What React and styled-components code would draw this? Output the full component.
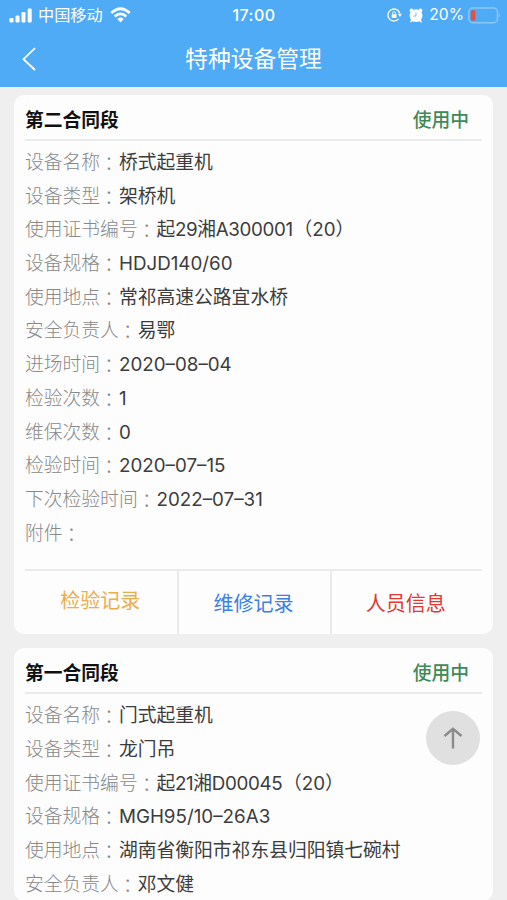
import React from 'react';
import styled, { createGlobalStyle } from 'styled-components';

const GlobalStyle = createGlobalStyle`
  * {
    box-sizing: border-box;
  }

  body {
    margin: 0;
    background: #efefef;
    font-family: Inter, 'Noto Sans CJK SC', sans-serif;
  }

  button {
    font-family: inherit;
    border: none;
    padding: 0;
    background: transparent;
  }
`;

const Page = styled.div`
  height: 900px;
  overflow: hidden;
  background: #efefef;
`;

const Header = styled.header`
  height: 87px;
  background: #50abf7;
  color: white;
`;

const StatusBar = styled.div`
  display: grid;
  grid-template-columns: 1fr auto 1fr;
  align-items: center;
  height: 30px;
  padding: 0 6px 0 9px;
  font-size: 16px;
  line-height: 30px;
`;

const StatusGroup = styled.div`
  display: flex;
  align-items: center;
  justify-content: ${(props) => (props.$end ? 'flex-end' : 'flex-start')};

  svg {
    flex-shrink: 0;
  }
`;

const Carrier = styled.span`
  margin: 0 7px 0 6px;
  font-size: 16.2px;
`;

const Clock = styled.span`
  margin-right: 2px;
  font-weight: 500;
  letter-spacing: 0.5px;
`;

const Percent = styled.span`
  margin: 0 4px 0 6px;
  font-size: 15.6px;
`;

const NavBar = styled.div`
  display: grid;
  grid-template-columns: 60px 1fr 60px;
  align-items: center;
  height: 57px;
`;

const BackButton = styled.button`
  display: flex;
  padding-left: 21px;
  color: white;
`;

const NavTitle = styled.h1`
  margin: 0;
  font-size: 22.8px;
  font-weight: 400;
  line-height: 56px;
  text-align: center;
`;

const List = styled.main`
  display: flex;
  flex-direction: column;
  gap: 14px;
  padding: 8px 14px 0;
`;

const Card = styled.section`
  padding: 0 11px;
  border-radius: 10px;
  background: #fdfdfd;
`;

const CardHeader = styled.div`
  display: flex;
  justify-content: space-between;
  height: 46px;
  padding-right: 13px;
  border-bottom: 2px solid #e9eaec;
  font-size: 18.8px;
  line-height: 51px;
`;

const Section = styled.span`
  font-weight: 700;
  color: #111;
`;

const Status = styled.span`
  font-weight: 500;
  color: #3f8a56;
`;

const Rows = styled.div`
  padding-top: 5px;
`;

const Row = styled.div`
  height: 33.7px;
  font-size: 18.8px;
  line-height: 33.7px;
  white-space: nowrap;
  color: #3c3c3c;
`;

const Label = styled.span`
  font-weight: 300;
  color: #888;
`;

const Colon = styled(Label)`
  display: inline-block;
  width: 1em;
  height: 33px;
  padding-right: 1px;
  text-align: center;
  vertical-align: top;
  line-height: 36px;
  font-feature-settings: 'halt';
`;

const Value = styled.span`
  letter-spacing: ${(props) => (props.$tight ? '-0.35px' : 'normal')};
`;

const Suffix = styled.span`
  margin-left: 10px;
  font-feature-settings: 'halt';
`;

const Actions = styled.div`
  display: grid;
  grid-template-columns: repeat(3, 1fr);
  height: 65px;
  margin-top: 19px;
  border-top: 2px solid #e9eaec;
`;

const ActionButton = styled.button`
  padding: 0 2px ${(props) => (props.$raised ? '7px' : '1px')} 0;
  font-size: 20px;
  color: ${(props) => props.$color};

  & + & {
    border-left: 2px solid #e9eaec;
  }
`;

const BackToTop = styled.button`
  position: fixed;
  top: 711px;
  left: 426px;
  display: flex;
  align-items: center;
  justify-content: center;
  width: 54px;
  height: 54px;
  border-radius: 50%;
  background: #e0e0e0;
`;

const devices = [
  {
    section: '第二合同段',
    status: '使用中',
    fields: [
      ['设备名称', '桥式起重机'],
      ['设备类型', '架桥机'],
      ['使用证书编号', '起29湘A300001', '（20）'],
      ['设备规格', 'HDJD140/60'],
      ['使用地点', '常祁高速公路宜水桥'],
      ['安全负责人', '易鄂'],
      ['进场时间', '2020–08–04'],
      ['检验次数', '1'],
      ['维保次数', '0'],
      ['检验时间', '2020–07–15'],
      ['下次检验时间', '2022–07–31'],
      ['附件', ''],
    ],
  },
  {
    section: '第一合同段',
    status: '使用中',
    fields: [
      ['设备名称', '门式起重机'],
      ['设备类型', '龙门吊'],
      ['使用证书编号', '起21湘D00045', '（20）'],
      ['设备规格', 'MGH95/10–26A3'],
      ['使用地点', '湖南省衡阳市祁东县归阳镇七碗村'],
      ['安全负责人', '邓文健'],
    ],
  },
];

function SignalIcon() {
  return (
    <svg width="23" height="15" viewBox="0 0 23 15" fill="white">
      <rect x="0.5" y="10" width="4" height="4.5" rx="1.2" />
      <rect x="6.5" y="7.5" width="4" height="7" rx="1.2" />
      <rect x="12.5" y="4" width="4" height="10.5" rx="1.2" />
      <rect x="18.7" y="0.5" width="4" height="14" rx="1.2" />
    </svg>
  );
}

function WifiIcon() {
  return (
    <svg width="21" height="16" viewBox="0 0 21 16" fill="none" stroke="white" strokeWidth="2.7">
      <path d="M1.3 6 Q10.5 -2.5 19.7 6" />
      <path d="M4.7 9.6 Q10.5 4.2 16.3 9.6" />
      <path d="M7.3 12 Q10.5 9.2 13.7 12 L10.5 15.5 Z" fill="white" stroke="none" />
    </svg>
  );
}

function RotationLockIcon() {
  return (
    <svg width="15" height="14" viewBox="0 0 15 14" fill="none" stroke="white" strokeWidth="1.3">
      <path d="M12.7 5.2 A6 6 0 1 0 11.6 10.9" />
      <path d="M10.9 5.8 h4 l-2 3.3z" fill="white" stroke="none" />
      <rect x="4.7" y="6.2" width="4.8" height="3.8" rx="0.5" fill="white" stroke="none" />
      <path d="M5.6 6.5 V5.2 a1.5 1.5 0 0 1 3 0 V6.5" strokeWidth="0.9" />
    </svg>
  );
}

function AlarmIcon() {
  return (
    <svg width="14" height="15" viewBox="0 0 14 15" fill="white">
      <circle cx="7" cy="7.6" r="6.4" />
      <circle cx="2.5" cy="2.5" r="1.9" />
      <circle cx="11.5" cy="2.5" r="1.9" />
      <path d="M3 12 L2 13.6 M11 12 L12 13.6" stroke="white" strokeWidth="1.7" strokeLinecap="round" />
      <path d="M7 4.6 V8 H4.6" fill="none" stroke="#50abf7" strokeWidth="0.8" />
    </svg>
  );
}

function BatteryIcon() {
  return (
    <svg width="33" height="17" viewBox="0 0 33 17" fill="none">
      <rect x="0.8" y="1" width="28.7" height="14.8" rx="4" stroke="#8ac8fa" strokeWidth="1.4" />
      <rect x="2.8" y="3.2" width="4.6" height="10.4" rx="1.5" fill="#e94e3e" />
      <path d="M31 6 q2 2.3 0 4.6z" fill="#8ac8fa" />
    </svg>
  );
}

function DeviceCard({ device, showActions }) {
  return (
    <Card>
      <CardHeader>
        <Section>{device.section}</Section>
        <Status>{device.status}</Status>
      </CardHeader>
      <Rows>
        {device.fields.map(([label, value, suffix]) => (
          <Row key={label}>
            <Label>{label}</Label>
            <Colon>：</Colon>
            <Value $tight={Boolean(suffix)}>{value}</Value>
            {suffix && <Suffix>{suffix}</Suffix>}
          </Row>
        ))}
      </Rows>
      {showActions && (
        <Actions>
          <ActionButton $color="#ebae4a" $raised>检验记录</ActionButton>
          <ActionButton $color="#3b7fe8">维修记录</ActionButton>
          <ActionButton $color="#e2382f">人员信息</ActionButton>
        </Actions>
      )}
    </Card>
  );
}

function App() {
  return (
    <Page>
      <GlobalStyle />
      <Header>
        <StatusBar>
          <StatusGroup>
            <SignalIcon />
            <Carrier>中国移动</Carrier>
            <WifiIcon />
          </StatusGroup>
          <Clock>17:00</Clock>
          <StatusGroup $end>
            <RotationLockIcon />
            <span style={{ width: 7 }} />
            <AlarmIcon />
            <Percent>20%</Percent>
            <BatteryIcon />
          </StatusGroup>
        </StatusBar>
        <NavBar>
          <BackButton>
            <svg width="16" height="24" viewBox="0 0 16 24" fill="none" stroke="white" strokeWidth="1.8">
              <path d="M14 1.2 L2.5 12.2 L14 23" />
            </svg>
          </BackButton>
          <NavTitle>特种设备管理</NavTitle>
        </NavBar>
      </Header>
      <List>
        {devices.map((device, index) => (
          <DeviceCard key={device.section} device={device} showActions={index === 0} />
        ))}
      </List>
      <BackToTop>
        <svg width="20" height="22" viewBox="0 0 20 22" fill="none" stroke="#8a8a8a" strokeWidth="2.4">
          <path d="M10 21.5 V2 M1.5 9 L10 1.8 L18.5 9" />
        </svg>
      </BackToTop>
    </Page>
  );
}

export default App;
